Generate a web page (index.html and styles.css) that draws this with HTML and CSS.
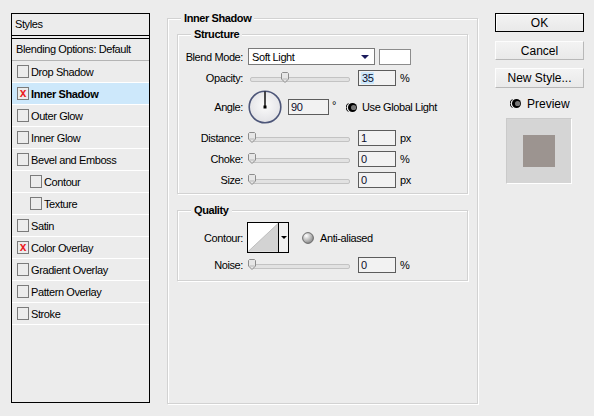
FILE: index.html
```html
<!DOCTYPE html>
<html lang="en">
<head>
  <meta charset="UTF-8" />
  <title>Layer Style – Inner Shadow</title>
  <link rel="stylesheet" href="styles.css">
</head>
<body>
  <div class="dialog">

    <div class="styles-list">
      <div class="list-head">Styles</div>
      <div class="list-blend">Blending Options: Default</div>
      <div class="list-item"><span class="check"></span>Drop Shadow</div>
      <div class="list-item active"><span class="check on">x</span>Inner Shadow</div>
      <div class="list-item"><span class="check"></span>Outer Glow</div>
      <div class="list-item"><span class="check"></span>Inner Glow</div>
      <div class="list-item"><span class="check"></span>Bevel and Emboss</div>
      <div class="list-item sub"><span class="check"></span>Contour</div>
      <div class="list-item sub"><span class="check"></span>Texture</div>
      <div class="list-item"><span class="check"></span>Satin</div>
      <div class="list-item"><span class="check on">x</span>Color Overlay</div>
      <div class="list-item"><span class="check"></span>Gradient Overlay</div>
      <div class="list-item"><span class="check"></span>Pattern Overlay</div>
      <div class="list-item"><span class="check"></span>Stroke</div>
    </div>

    <div class="settings">
      <fieldset class="group main">
        <legend>Inner Shadow</legend>

        <fieldset class="group structure">
          <legend>Structure</legend>

          <div class="row row-blend">
            <span class="label">Blend Mode:</span>
            <div class="select">Soft Light<span class="arrow"></span></div>
            <div class="swatch"></div>
          </div>

          <div class="row row-opacity">
            <span class="label">Opacity:</span>
            <div class="slider">
              <svg class="thumb" style="left:33px" width="8" height="11" viewBox="0 0 8 11"><path d="M1.5 .5h5l1 1v5.5l-3.5 3.5l-3.5-3.5v-5.5z" fill="#e6e6e6" stroke="#8c8c8c"/><path d="M1.5 7h5" stroke="#b8b8b8"/></svg>
            </div>
            <div class="num"><span class="sel">35</span></div>
            <span class="unit">%</span>
          </div>

          <div class="row row-angle">
            <span class="label">Angle:</span>
            <svg class="dial" width="34" height="34" viewBox="0 0 34 34">
              <defs>
                <radialGradient id="dialFill" cx="50%" cy="45%" r="55%">
                  <stop offset="0" stop-color="#fbfbfb"/>
                  <stop offset="1" stop-color="#e2e2e6"/>
                </radialGradient>
              </defs>
              <circle cx="17" cy="17" r="15.8" fill="url(#dialFill)" stroke="#4d5679" stroke-width="1.6"/>
              <path d="M17 17V1.5" stroke="#000" stroke-width="1.4"/>
              <rect x="15.5" y="15.5" width="3" height="3" fill="#000"/>
            </svg>
            <div class="num wide">90</div>
            <span class="deg">°</span>
            <svg class="light" width="11" height="11" viewBox="0 0 11 11"><path d="M2.3 1.3a5.2 5.2 0 0 0 0 8.4" fill="none" stroke="#000"/><circle cx="6.5" cy="5.5" r="4.5" fill="#000"/><circle cx="7.6" cy="5.5" r="2.6" fill="#777"/></svg>
            <span class="opt">Use Global Light</span>
          </div>

          <div class="row row-distance">
            <span class="label">Distance:</span>
            <div class="slider">
              <svg class="thumb" style="left:0" width="8" height="11" viewBox="0 0 8 11"><path d="M1.5 .5h5l1 1v5.5l-3.5 3.5l-3.5-3.5v-5.5z" fill="#e6e6e6" stroke="#8c8c8c"/><path d="M1.5 7h5" stroke="#b8b8b8"/></svg>
            </div>
            <div class="num">1</div>
            <span class="unit">px</span>
          </div>

          <div class="row">
            <span class="label">Choke:</span>
            <div class="slider">
              <svg class="thumb" style="left:0" width="8" height="11" viewBox="0 0 8 11"><path d="M1.5 .5h5l1 1v5.5l-3.5 3.5l-3.5-3.5v-5.5z" fill="#e6e6e6" stroke="#8c8c8c"/><path d="M1.5 7h5" stroke="#b8b8b8"/></svg>
            </div>
            <div class="num">0</div>
            <span class="unit">%</span>
          </div>

          <div class="row">
            <span class="label">Size:</span>
            <div class="slider">
              <svg class="thumb" style="left:0" width="8" height="11" viewBox="0 0 8 11"><path d="M1.5 .5h5l1 1v5.5l-3.5 3.5l-3.5-3.5v-5.5z" fill="#e6e6e6" stroke="#8c8c8c"/><path d="M1.5 7h5" stroke="#b8b8b8"/></svg>
            </div>
            <div class="num">0</div>
            <span class="unit">px</span>
          </div>
        </fieldset>

        <fieldset class="group quality">
          <legend>Quality</legend>

          <div class="row row-contour">
            <span class="label">Contour:</span>
            <div class="contour">
              <svg width="31" height="29" viewBox="0 0 31 29"><path d="M0 29L31 0V29z" fill="#d3d3d3"/><path d="M0 29L31 0" stroke="#bdbdbd"/></svg>
              <span class="contour-drop"><span class="arrow small"></span></span>
            </div>
            <svg class="ball" width="12" height="12" viewBox="0 0 12 12">
              <defs>
                <radialGradient id="ballFill" cx="35%" cy="30%" r="70%">
                  <stop offset="0" stop-color="#ffffff"/>
                  <stop offset="1" stop-color="#8d8d8d"/>
                </radialGradient>
              </defs>
              <circle cx="6" cy="6" r="5.4" fill="url(#ballFill)" stroke="#5f5f5f" stroke-width=".9"/>
            </svg>
            <span class="opt">Anti-aliased</span>
          </div>

          <div class="row row-noise">
            <span class="label">Noise:</span>
            <div class="slider">
              <svg class="thumb" style="left:0" width="8" height="11" viewBox="0 0 8 11"><path d="M1.5 .5h5l1 1v5.5l-3.5 3.5l-3.5-3.5v-5.5z" fill="#e6e6e6" stroke="#8c8c8c"/><path d="M1.5 7h5" stroke="#b8b8b8"/></svg>
            </div>
            <div class="num">0</div>
            <span class="unit">%</span>
          </div>
        </fieldset>
      </fieldset>
    </div>

    <div class="actions">
      <button class="btn default">OK</button>
      <button class="btn">Cancel</button>
      <button class="btn">New Style...</button>
      <div class="preview-toggle">
        <svg width="11" height="11" viewBox="0 0 11 11"><path d="M2.3 1.3a5.2 5.2 0 0 0 0 8.4" fill="none" stroke="#000"/><circle cx="6.5" cy="5.5" r="4.5" fill="#000"/><circle cx="7.6" cy="5.5" r="2.6" fill="#777"/></svg>
        <span>Preview</span>
      </div>
      <div class="preview"><div class="preview-swatch"></div></div>
    </div>

  </div>
</body>
</html>
```

FILE: styles.css
```css
/* base */
* { box-sizing:border-box; }
body {
  margin:0; height:416px; overflow:hidden;
  background:#ececec; color:#000;
  font-family:"Liberation Sans", Arial, sans-serif; font-size:11px; letter-spacing:-0.4px;
}
.dialog { display:flex; align-items:flex-start; padding:13px 0 0 11px; }

/* left: styles list */
.styles-list { flex:none; width:139px; height:390px; border:1px solid #000; }
.list-head { height:22px; line-height:21px; padding-left:3px; border-bottom:1px solid #000; }
.list-blend {
  margin-top:2px; height:23px; line-height:21px; padding-left:4px;
  border-top:1px solid #000; border-bottom:1px solid #b4b4b4;
}
.list-item {
  display:flex; align-items:center; height:22px; padding-left:5px;
  border-bottom:1px solid #fff;
}
.list-item.sub { padding-left:18px; }
.list-item.active { background:#cde8fb; font-weight:bold; }
.check {
  flex:none; width:12px; height:13px; margin-right:2px;
  border:1px solid #7b7b7b; background:#ececec;
  color:#ec1c24; font-weight:bold; font-size:12px; line-height:10px; text-align:center; letter-spacing:0;
}

/* middle: settings */
.settings { flex:none; width:311px; margin-left:17px; margin-top:-1px; }
.group {
  margin:0; min-width:0;
  border:1px solid #d2d2d2;
  box-shadow:inset 1px 1px 0 #fff, 1px 1px 0 #fff;
}
.group > legend { padding:0 3px; line-height:13px; font-weight:bold; background:#ececec; }
.main { height:392px; padding:3px 9px 0 9px; }
.main > legend { margin-left:4px; }
.structure { padding:7px 0 5px 0; }
.quality { margin-top:10px; padding:5px 0 7px 0; }
.structure > legend,
.quality > legend { margin-left:13px; }

.row { display:flex; align-items:center; height:16px; margin-top:5px; }
.row-blend { height:17px; margin-top:0; }
.row-angle { height:34px; margin-top:4px; }
.row-distance { margin-top:6px; }
.row-contour { height:31px; margin-top:0; }
.row-noise { margin-top:4px; }
.label { flex:none; width:65px; margin-right:5px; text-align:right; }
.row-contour .label { margin-right:4px; }

.select {
  display:flex; align-items:center; justify-content:space-between;
  width:127px; height:17px; padding-left:3px;
  border:1px solid #7a7a7a; background:#fff;
}
.arrow {
  width:0; height:0; margin-right:5px;
  border-left:4px solid transparent; border-right:4px solid transparent;
  border-top:4px solid #1b1b5c;
}
.arrow.small { margin:0; border-left-width:3px; border-right-width:3px; border-top:3px solid #000; }
.swatch { width:32px; height:16px; margin-left:4px; border:1px solid #8c8c8c; background:#fff; }

.slider { position:relative; flex:none; width:102px; height:16px; margin-right:8px; }
.slider::before {
  content:""; position:absolute; left:2px; right:0; top:7px; height:3px;
  background:#e2e2e2; border:1px solid #c3c3c3; border-radius:2px;
}
.thumb { position:absolute; top:2px; }

.num {
  flex:none; width:38px; height:16px; padding-left:2px;
  border:1px solid #5c5c5c; background:#f2f2f2;
  line-height:14px; color:#0d0d2b;
}
.num.wide { width:41px; margin-left:6px; }
.sel { background:#cce8fb; padding:0 1px; }
.unit { margin-left:4px; }
.deg { margin-left:3px; margin-bottom:5px; }
.light { margin-left:10px; flex:none; }
.opt { margin-left:5px; }
.dial { flex:none; }

.contour {
  display:flex; width:42px; height:31px;
  border:1px solid #000; background:#fff;
}
.contour-drop {
  display:flex; align-items:center; justify-content:center;
  width:10px; border-left:1px solid #000; background:#f0f0f0;
}
.ball { flex:none; margin-left:13px; }
.row-contour .opt { margin-left:6px; }

/* right: buttons and preview */
.actions { flex:none; display:flex; flex-direction:column; width:89px; margin-left:17px; }
.btn {
  height:19px; padding:0;
  font-family:"Liberation Sans", Arial, sans-serif; font-size:12px; letter-spacing:0; color:#000;
  background:linear-gradient(#f3f3f3, #e9e9e9);
  border:1px solid; border-color:#fdfdfd #b8b8b8 #b8b8b8 #fdfdfd;
}
.btn + .btn { margin-top:9px; }
.btn:last-of-type { height:20px; margin-top:8px; }
.btn.default { border:1px solid #000; box-shadow:inset 1px 1px 0 #fff; }
.preview-toggle {
  display:flex; align-items:center; height:13px; margin-top:9px; padding-left:15px;
  font-size:12px; letter-spacing:0;
}
.preview-toggle span { margin-left:6px; }
.preview {
  display:flex; align-items:center; justify-content:center;
  width:66px; height:66px; margin:8px 0 0 11px;
  background:#d5d5d5; border:1px solid; border-color:#cacaca #fff #fff #cacaca;
}
.preview-swatch { width:32px; height:32px; background:#9c9490; }
```
